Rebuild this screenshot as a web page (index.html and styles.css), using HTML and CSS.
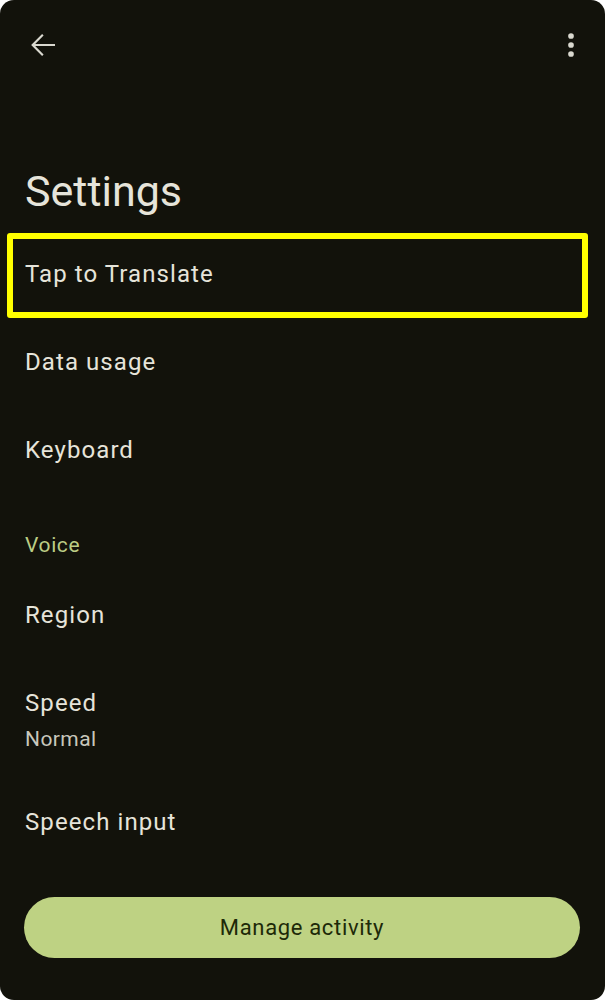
FILE: index.html
```html
<!DOCTYPE html>
<html lang="en">
<head>
  <meta charset="UTF-8">
  <meta name="viewport" content="width=device-width, initial-scale=1.0">
  <title>Settings</title>
  <link rel="stylesheet" href="styles.css">
</head>
<body>
  <div class="screen">
    <div class="topbar">
      <button class="icon-btn" aria-label="Back">
        <svg viewBox="0 0 24 24" width="36" height="36"><path d="M20 11.3H6.8l5.6-5.6-1-1L4.1 12l7.3 7.3 1-1-5.6-5.6H20z" fill="currentColor"/></svg>
      </button>
      <button class="icon-btn" aria-label="More options">
        <svg viewBox="0 0 24 24" width="36" height="36"><circle cx="12" cy="6" r="1.9" fill="currentColor"/><circle cx="12" cy="12" r="1.9" fill="currentColor"/><circle cx="12" cy="18" r="1.9" fill="currentColor"/></svg>
      </button>
    </div>

    <h1 class="title">Settings</h1>

    <ul class="list">
      <li class="row highlight">Tap to Translate</li>
      <li class="row">Data usage</li>
      <li class="row">Keyboard</li>
      <li class="section">Voice</li>
      <li class="row">Region</li>
      <li class="row two-line">
        <div>Speed</div>
        <div class="sub">Normal</div>
      </li>
      <li class="row">Speech input</li>
    </ul>

    <button class="manage">Manage activity</button>
  </div>
</body>
</html>
```

FILE: styles.css
```css
body {
  margin: 0;
  background: #ffffff;
  font-family: Roboto, "Noto Sans", Arial, sans-serif;
}
.screen {
  background: #12120b;
  color: #e6e4da;
  border-radius: 14px;
  height: 1000px;
  display: flex;
  flex-direction: column;
  overflow: hidden;
}
.topbar {
  display: flex;
  justify-content: space-between;
  padding: 27px 16px 0 25px;
  height: 36px;
}
.icon-btn {
  background: none;
  border: none;
  padding: 0;
  width: 36px;
  height: 36px;
  color: #d9d8cf;
}
.icon-btn svg {
  display: block;
}
.title {
  margin: 102px 0 13px;
  padding: 0 25px;
  font-size: 43px;
  line-height: 52px;
  font-weight: 400;
}
.list {
  list-style: none;
  margin: 0;
  padding: 0;
}
.row {
  position: relative;
  padding: 30px 25px;
  font-size: 24px;
  line-height: 28px;
  letter-spacing: 0.045em;
}
.highlight::after {
  content: "";
  position: absolute;
  top: 3px;
  left: 7px;
  right: 17px;
  bottom: 0;
  border: 6px solid #ffff00;
  border-radius: 3px;
}
.section {
  padding: 39px 25px 14px;
  font-size: 21px;
  line-height: 24px;
  color: #bccd85;
  letter-spacing: 0.03em;
}
.two-line {
  padding: 30px 25px 27px;
}
.sub {
  margin-top: 10px;
  font-size: 21px;
  line-height: 24px;
  color: #c8c7bc;
  letter-spacing: 0.02em;
}
.manage {
  margin: auto 25px 42px 24px;
  height: 61px;
  border: none;
  border-radius: 31px;
  background: #bed283;
  color: #1d2908;
  font-family: inherit;
  font-size: 22px;
  letter-spacing: 0.03em;
}
```
